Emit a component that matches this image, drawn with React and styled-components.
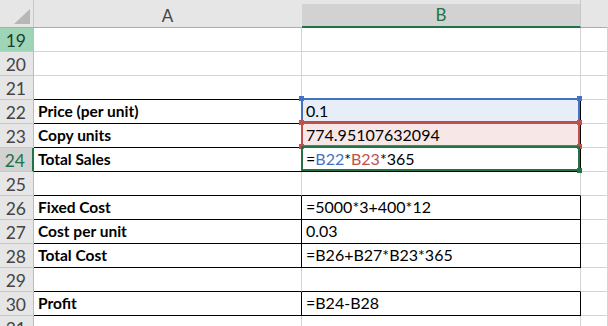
import React from 'react'
import styled, { createGlobalStyle } from 'styled-components'

const GlobalStyle = createGlobalStyle`
    html, body {
        margin: 0;
        padding: 0;
        background: #fff;
        overflow: hidden;
    }
`

const GRID = '#d4d4d4'
const HEAD_LINE = '#ababab'
const EXCEL_GREEN = '#217346'

const Sheet = styled.div`
    display: grid;
    grid-template-columns: 34px 268px 279px 1fr;
    grid-template-rows: 28px;
    grid-auto-rows: 24px;
    width: 608px;
    height: 326px;
    overflow: hidden;
    font-family: Lato, 'Liberation Sans', sans-serif;
    font-size: 16px;
    color: #000;
`

const Corner = styled.div`
    position: relative;
    background: #e6e6e6;
    border-right: 1px solid #c8c8c8;
    border-bottom: 1px solid ${HEAD_LINE};
    box-sizing: border-box;

    svg {
        position: absolute;
        right: 3px;
        bottom: 3px;
    }
`

const ColHead = styled.div`
    display: flex;
    align-items: center;
    justify-content: center;
    box-sizing: border-box;
    padding-top: 3px;
    font-size: 17px;
    color: ${p => (p.$active ? EXCEL_GREEN : '#444')};
    background: ${p => (p.$active ? 'linear-gradient(#e6e6e6 4px, #d2d2d2 4px)' : '#e6e6e6')};
    border-right: 1px solid ${p => (p.$divider ? '#c8c8c8' : 'transparent')};
    border-bottom: ${p => (p.$active ? `2px solid ${EXCEL_GREEN}` : `1px solid ${HEAD_LINE}`)};
`

const RowHead = styled.div`
    display: flex;
    align-items: center;
    justify-content: flex-end;
    box-sizing: border-box;
    padding: 1px 7px 0 0;
    font-size: 17.5px;
    color: ${p => (p.$tone === 'active' ? EXCEL_GREEN : p.$tone === 'mark' ? '#1c3f2c' : '#444')};
    background: ${p => (p.$tone === 'active' ? '#d2d2d2' : p.$tone === 'mark' ? '#9fd5b7' : '#e6e6e6')};
    border-bottom: 1px solid #c8c8c8;
    border-right: ${p => (p.$tone === 'active' ? `2px solid ${EXCEL_GREEN}` : '1px solid #bcbcbc')};
`

const Cell = styled.div`
    position: relative;
    display: flex;
    align-items: flex-end;
    box-sizing: border-box;
    padding: 0 4px 2px;
    line-height: 20px;
    white-space: nowrap;
    font-weight: ${p => (p.$bold ? 700 : 400)};
    font-size: ${p => (p.$bold ? '15.5px' : '16px')};
    background: ${p => p.$fill || '#fff'};
    border-right: 1px solid ${p => (p.$boxed ? '#000' : GRID)};
    border-bottom: 1px solid ${p => (p.$under ? '#000' : GRID)};
`

// coloured outline drawn over a cell that a formula points at
const RefFrame = styled.div`
    position: absolute;
    top: -2px;
    left: -1px;
    right: 0;
    bottom: 0;
    border: 2px solid ${p => p.$color};
    pointer-events: none;
    z-index: ${p => p.$z};
`

const Handle = styled.span`
    position: absolute;
    width: 5px;
    height: 5px;
    background: ${p => p.$color};
    ${p => (p.$v === 'top' ? 'top: -4px;' : 'bottom: -4px;')}
    ${p => (p.$h === 'left' ? 'left: -4px;' : 'right: -4px;')}
`

const Ref = styled.span`
    color: ${p => p.$color};
`

const BLUE = '#4472c4'
const RED = '#c0504d'

const Frame = ({color, corners, z}) => (
    <RefFrame $color={color} $z={z}>
        {corners.map(([v, h]) => (
            <Handle key={v + h} $v={v} $h={h} $color={color} />
        ))}
    </RefFrame>
)

const allCorners = [['top', 'left'], ['top', 'right'], ['bottom', 'left'], ['bottom', 'right']]

const rows = [
    {n: 19},
    {n: 20},
    {n: 21},
    {n: 22, label: 'Price (per unit)', value: '0.1', fill: '#e8eef8', frame: {color: BLUE, corners: allCorners, z: 1}},
    {n: 23, label: 'Copy units', value: '774.95107632094', fill: '#f8e7e7', frame: {color: RED, corners: allCorners, z: 2}},
    {
        n: 24,
        label: 'Total Sales',
        value: (
            <>
                =<Ref $color={BLUE}>B22</Ref>*<Ref $color={RED}>B23</Ref>*365
            </>
        ),
        frame: {color: EXCEL_GREEN, corners: [['bottom', 'right']], z: 3},
    },
    {n: 25},
    {n: 26, label: 'Fixed Cost', value: '=5000*3+400*12'},
    {n: 27, label: 'Cost per unit', value: '0.03'},
    {n: 28, label: 'Total Cost', value: '=B26+B27*B23*365'},
    {n: 29},
    {n: 30, label: 'Profit', value: '=B24-B28'},
    {n: 31},
]

const CornerMark = () => (
    <svg width="16" height="15" viewBox="0 0 16 15">
        <polygon points="16,0 16,15 0,15" fill="#b7b7b7" />
    </svg>
)

export default function App() {
    return (
        <>
            <GlobalStyle />
            <Sheet>
                <Corner>
                    <CornerMark />
                </Corner>
                <ColHead>A</ColHead>
                <ColHead $active $divider>B</ColHead>
                <ColHead />

                {rows.map((row, i) => {
                    const boxed = Boolean(row.label)
                    const next = rows[i + 1]
                    const under = boxed || Boolean(next && next.label)
                    const tone = row.n === 24 ? 'active' : row.n === 19 ? 'mark' : 'plain'
                    return (
                        <React.Fragment key={row.n}>
                            <RowHead $tone={tone}>{row.n}</RowHead>
                            <Cell $bold $boxed={boxed} $under={under}>
                                {row.label}
                            </Cell>
                            <Cell $boxed={boxed} $under={under} $fill={row.fill}>
                                {row.value}
                                {row.frame && <Frame {...row.frame} />}
                            </Cell>
                            <Cell />
                        </React.Fragment>
                    )
                })}
            </Sheet>
        </>
    )
}
